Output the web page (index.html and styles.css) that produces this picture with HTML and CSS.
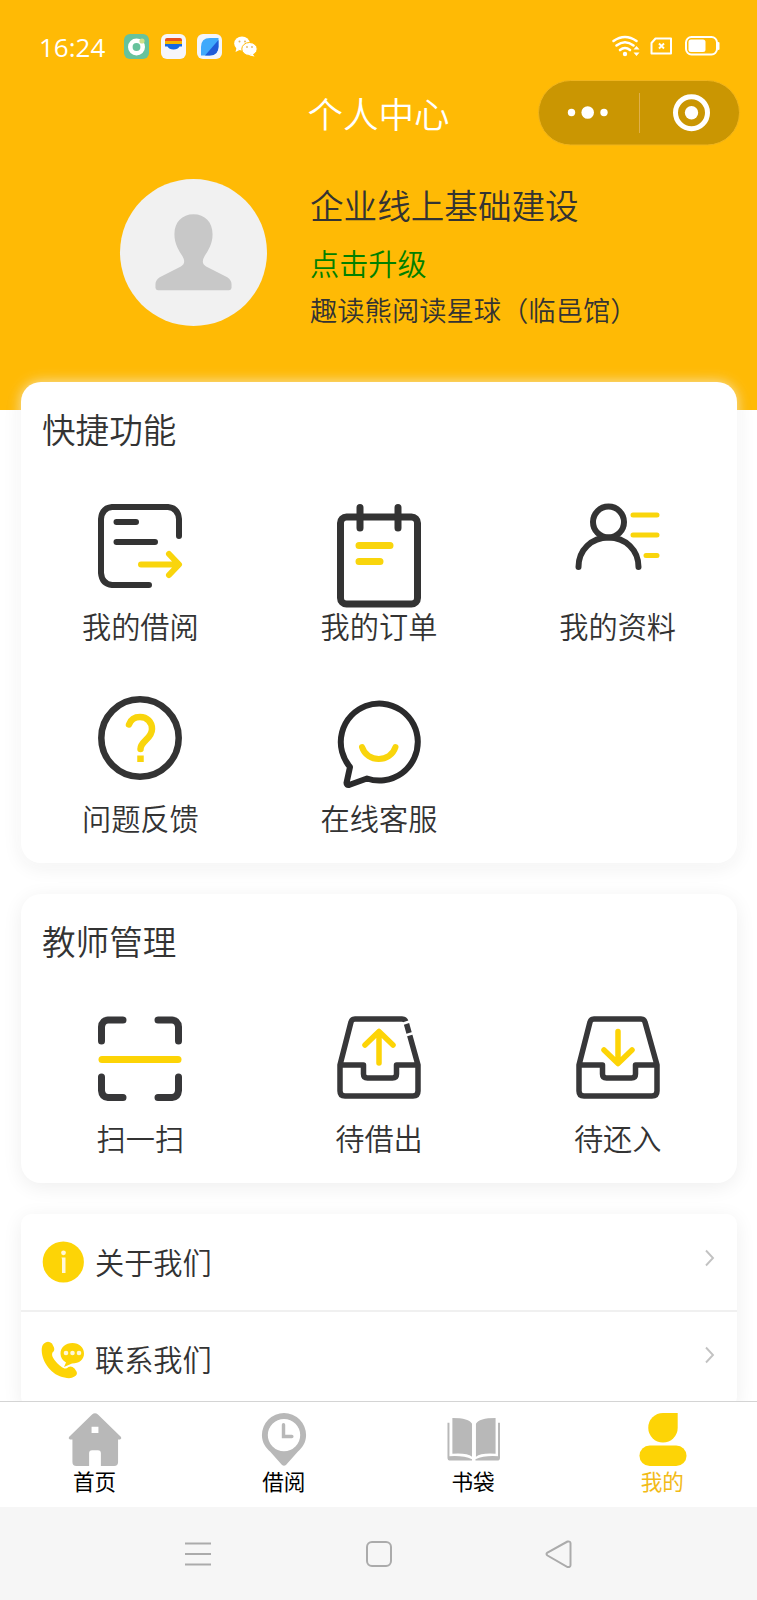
FILE: index.html
```html
<!DOCTYPE html>
<html lang="zh-CN">
<head>
<meta charset="utf-8">
<title>个人中心</title>
<link rel="stylesheet" href="styles.css">
</head>
<body>
<div class="screen">
  <header class="header">
    <div class="status">
      <span class="time">16:24</span>
      <svg class="status-left" width="136" height="28" viewBox="0 0 136 28">
        <rect x="1" y="1" width="25" height="25" rx="6" fill="#67c29c"/>
        <circle cx="13.500" cy="14" r="6.200" fill="none" stroke="#fff" stroke-width="4.600"/>
        <circle cx="19" cy="8" r="2.600" fill="#cfe08a"/>
        <rect x="38" y="1" width="25" height="25" rx="6" fill="#f6f6fb"/>
        <path d="M42 8V7q0-2 2-2h13q2 0 2 2v1z" fill="#e8501f"/>
        <path d="M42 8h17v3H42z" fill="#f7b500"/>
        <path d="M42 11h17v2.500h-2.500q-1.500 3-6 3t-6-3H42z" fill="#1668e3"/>
        <rect x="74" y="1" width="25" height="25" rx="6" fill="#f3f5fb"/>
        <path d="M78 22.500v-8.500q0-9 9-9h8.500v8.500q0 9-9 9z" fill="#3fa9fb"/>
        <path d="M82 22.500 95.500 7v6.500q0 9-9 9z" fill="#1f5bd8"/>
        <ellipse cx="119" cy="10.500" rx="7.800" ry="7" fill="#fff"/>
        <path d="m113.500 15-1 4 4-2z" fill="#fff"/>
        <ellipse cx="126.500" cy="16" rx="7.700" ry="6.500" fill="#fff" stroke="#ffba05" stroke-width="1"/>
        <path d="m129.500 20.500 2 3-5-1z" fill="#fff"/>
        <g fill="#e0b860"><circle cx="116.500" cy="8.500" r="1"/><circle cx="122" cy="8.500" r="1"/><circle cx="124" cy="14" r=".9"/><circle cx="129" cy="14" r=".9"/></g>
      </svg>
      <svg class="status-right" width="110" height="24" viewBox="0 0 110 24" fill="none" stroke="#fff">
        <path d="M2.500 6q11.500-8 23 0M5.500 10.500q8.500-6.500 17 0M9 15q5-4 10 0" stroke-width="2.600" stroke-linecap="round"/>
        <circle cx="14" cy="19" r="2.200" fill="#fff" stroke="none"/>
        <path d="m22.500 14.500 3-3.500 3 3.500zM22.500 17.500l3 3.500 3-3.500z" fill="#fff" stroke="none"/>
        <path d="M44.500 3.500H60v15H40.500V8z" stroke-width="2" stroke-linejoin="round"/>
        <path d="m48 8.500 5 5m0-5-5 5" stroke-width="1.900"/>
        <rect x="75" y="2" width="31" height="17.500" rx="5.500" stroke-width="2"/>
        <rect x="77.500" y="4.500" width="17" height="12.500" rx="2.500" fill="#fff" stroke="none"/>
        <path d="M107.500 8v6" stroke-width="2" stroke-linecap="round"/>
      </svg>
    </div>
    <div class="navbar">
      <h1 class="title">个人中心</h1>
      <svg class="capsule" width="202" height="66" viewBox="0 0 202 66">
        <rect x=".5" y=".5" width="201" height="64.500" rx="32.250" fill="#ca9602" stroke="#f0b41c"/>
        <path d="M101.500 13v40" stroke="#dfb04a"/>
        <g fill="#fff"><circle cx="33.500" cy="32.500" r="3.700"/><circle cx="49.700" cy="32.500" r="6.300"/><circle cx="66" cy="32.500" r="3.700"/><circle cx="153.500" cy="32.700" r="6.700"/></g>
        <circle cx="153.500" cy="32.700" r="16" fill="none" stroke="#fff" stroke-width="5"/>
      </svg>
    </div>
    <div class="profile">
      <svg class="avatar" width="147" height="147" viewBox="0 0 148 148">
        <circle cx="74" cy="74" r="74" fill="#f1f1f1"/>
        <path d="M74 35.500c-11.500 0-19.200 8-19.200 20 0 11 5.500 17.500 8.500 23 2 4 2 7-2 9.500L40 99q-4.300 3-4.300 7v3.500q0 2.500 2.500 2.500h71.600q2.500 0 2.500-2.500V106q0-4-4.300-7L86.700 88c-4-2.500-4-5.500-2-9.500 3-5.500 8.500-12 8.500-23 0-12-7.700-20-19.200-20z" fill="#c8c8c8"/>
      </svg>
      <div class="identity">
        <div class="name">企业线上基础建设</div>
        <div class="upgrade">点击升级</div>
        <div class="venue">趣读熊阅读星球（临邑馆）</div>
      </div>
    </div>
  </header>

  <main class="content">
    <section class="card quick">
      <h2 class="card-title">快捷功能</h2>
      <div class="grid">
        <div class="cell">
          <svg class="icon" viewBox="0 0 84 84"><g fill="none" stroke="#333" stroke-width="6" stroke-linecap="round" stroke-linejoin="round"><path d="M81 32V15Q80 4 70 3H14Q4 4 3 15v54q1 11 11 12h37M18.500 18H38M18.500 38H57"/><path d="M43 60.500h37M71 50l10 10.500L71 71" stroke="#f9d50c"/></g></svg>
          <span>我的借阅</span>
        </div>
        <div class="cell">
          <svg class="icon" viewBox="0 0 84 84"><g fill="none" stroke="#333" stroke-width="7" stroke-linecap="round"><rect x="3.500" y="13" width="77" height="87" rx="6"/><path d="M23 3.500V24M61 3.500V24"/><path d="M22 41.500h31M22 57.500h21" stroke="#f9d50c"/></g></svg>
          <span>我的订单</span>
        </div>
        <div class="cell">
          <svg class="icon" viewBox="0 0 84 84"><g fill="none" stroke="#333" stroke-width="6" stroke-linecap="round"><circle cx="32.500" cy="18" r="15.500"/><path d="M2.500 63c0-17 13-29.500 30-29.500s30 12.500 30 29.500"/><path d="M57 11h24M57 31h24M70 51.500h11" stroke="#f9d50c" stroke-width="5"/></g></svg>
          <span>我的资料</span>
        </div>
        <div class="cell">
          <svg class="icon" viewBox="0 0 84 84"><g fill="none" stroke="#333" stroke-width="6.500"><circle cx="42" cy="42" r="38.700"/><path d="M31 28.500c2-5.500 6-7.500 11-7.500 7 0 12 5 12 12 0 10-11.500 12-11.500 20" stroke="#f9d50c" stroke-linecap="round"/><path d="M42.500 59.500v6.500" stroke="#f9d50c"/></g></svg>
          <span>问题反馈</span>
        </div>
        <div class="cell">
          <svg class="icon" viewBox="0 0 84 84"><g fill="none" stroke="#2a2a2b" stroke-width="6" stroke-linecap="round" stroke-linejoin="round"><path d="M30 82.500A38.500 38.500 0 1 0 13 71L9.500 87q0 2.500 2.500 2z"/><path d="M25 51c5 16 28.500 16 33.500 0" stroke="#f9d50c"/></g></svg>
          <span>在线客服</span>
        </div>
      </div>
    </section>

    <section class="card teacher">
      <h2 class="card-title">教师管理</h2>
      <div class="grid">
        <div class="cell">
          <svg class="icon" viewBox="0 0 84 84"><g fill="none" stroke="#373739" stroke-width="7" stroke-linecap="round"><path d="M25 4H10Q4 4.500 3.500 11v14M60 4h14q6 .5 6.500 7v14M25 81.500H10Q4 81 3.500 74.500V61M60 81.500h14q6-.5 6.500-7V61"/><path d="M4 43.500h76" stroke="#fdd406"/></g></svg>
          <span>扫一扫</span>
        </div>
        <div class="cell">
          <svg class="icon" viewBox="0 0 84 84"><g fill="none" stroke="#373739" stroke-width="5.500" stroke-linejoin="round"><path d="M3 49 14 6q1-3 4-3h47q3 0 4 3l12 43v26q0 5-5 5H8q-5 0-5-5zM3 49h23.500v9q0 4 4 4h25q4 0 4-4v-9H81"/><path d="M42 47V17M28 29l14-13.500L56 29" stroke="#fdd406" stroke-linecap="round"/></g><path d="m65 8 9-3M66.500 20l10-3" stroke="#fff" stroke-width="2.500"/></svg>
          <span>待借出</span>
        </div>
        <div class="cell">
          <svg class="icon" viewBox="0 0 84 84"><g fill="none" stroke="#373739" stroke-width="5.500" stroke-linejoin="round"><path d="M3 49 14 6q1-3 4-3h47q3 0 4 3l12 43v26q0 5-5 5H8q-5 0-5-5zM3 49h23.500v9q0 4 4 4h25q4 0 4-4v-9H81"/><path d="M42 15.500V47M28 34l14 13.500L56 34" stroke="#fdd406" stroke-linecap="round"/></g></svg>
          <span>待还入</span>
        </div>
      </div>
    </section>

    <section class="card list">
      <div class="row">
        <svg width="42" height="42" viewBox="0 0 42 42"><circle cx="21.300" cy="22" r="20.600" fill="#fdd406"/><circle cx="21.500" cy="12.800" r="2.400" fill="#fff8d8"/><path d="M19.500 17.500h4V33H20V19z" fill="#fff8d8"/></svg>
        <span>关于我们</span>
        <svg class="chevron" width="12" height="20" viewBox="0 0 12 20"><path d="m2 2.500 7 7.500-7 7.500" fill="none" stroke="#c2c2c2" stroke-width="1.900"/></svg>
      </div>
      <div class="row">
        <svg width="42" height="42" viewBox="0 -4.500 42 42"><path d="M2 2q4-3.500 8 0l2 4q1 3-1.500 5-1.500 3 2 7.500 5 6.500 10 8.500 2 .5 4-1.500 3-1.500 6 1.500l2 3q1.500 3-2 5-4 3-10 1C10 34 0 21-.3 9Q-.5 4 2 2z" fill="#fdd406"/><path d="M30.500 1.500c-7 0-12 4.500-12 10.500 0 4 2 7 5.500 9l-2 4.500 8-3.500c7.500 0 12-4 12-10s-5-10.500-11.500-10.500z" fill="#fdd406"/><g fill="#fff8d8"><circle cx="24" cy="11.500" r="2.300"/><circle cx="30.500" cy="11.500" r="2.300"/><circle cx="37" cy="11.500" r="2.300"/></g></svg>
        <span>联系我们</span>
        <svg class="chevron" width="12" height="20" viewBox="0 0 12 20"><path d="m2 2.500 7 7.500-7 7.500" fill="none" stroke="#c2c2c2" stroke-width="1.900"/></svg>
      </div>
    </section>
  </main>

  <nav class="tabs">
    <a class="tab"><svg width="54" height="53" viewBox="0 0 54 54"><path d="M24 1.500q3-2.500 6 0l23.500 23q1 2-1 2.500h-2v23q0 4-4 4H33V41q0-3-3-3h-6q-3 0-3 3v13H8q-4 0-4-4V27H1.500q-2-.5-1-2.500zM23.500 14v6.500h7V14z" fill="#b8b8b8"/></svg>首页</a>
    <a class="tab"><svg width="54" height="53" viewBox="0 0 54 54"><path d="M27 0A22.500 22.500 0 0 0 4.500 22.500c0 8 4 13 8.500 17l12 13.500q2 1.500 4 0l12-13.500c4.500-4 8.500-9 8.500-17A22.500 22.500 0 0 0 27 0zm0 6a16.500 16.500 0 1 1 0 33 16.500 16.500 0 0 1 0-33z" fill="#b8b8b8"/><path d="M26.500 12v12H35" fill="none" stroke="#b8b8b8" stroke-width="3.500" stroke-linecap="round"/></svg>借阅</a>
    <a class="tab"><svg width="54" height="53" viewBox="0 0 54 54"><path d="M6 5q17 0 20 6v33.500q-5-4-20-3zM50 5q-17 0-20 6v33.500q5-4 20-3zM1 10h2v34q14-1 23 3v1.500H4q-3 0-3-3zM54.500 10h-2v34q-14-1-23 3v1.500h22q3 0 3-3z" fill="#b8b8b8"/></svg>书袋</a>
    <a class="tab active"><svg width="54" height="53" viewBox="0 0 54 54"><path d="M43 0v15a15 15 0 1 1-15-15z" fill="#fdd406"/><rect x="4" y="33" width="48" height="21" rx="10.500" fill="#fdd406"/></svg>我的</a>
  </nav>

  <footer class="system">
    <svg width="28" height="28" viewBox="0 0 28 28"><path d="M0 3.500h26M0 14h26M0 24.500h26" stroke="#ababab" stroke-width="2"/></svg>
    <svg width="28" height="28" viewBox="0 0 28 28"><rect x="2" y="2" width="24" height="24" rx="5" fill="none" stroke="#ababab" stroke-width="2"/></svg>
    <svg width="28" height="28" viewBox="0 0 28 28"><path d="M22.500 1.500l-20 11q-2 1.500 0 3l20 11.500q3 .5 3-2V3.500q0-2.500-3-2z" fill="none" stroke="#ababab" stroke-width="2"/></svg>
  </footer>
</div>
</body>
</html>
```
FILE: styles.css
```css
* { box-sizing: border-box; }
body { margin: 0; font-family: "Noto Sans CJK SC", sans-serif; font-weight: 350; color: #333; }
h1, h2 { margin: 0; font-weight: inherit; }
svg { display: block; flex: none; overflow: visible; }

.screen { width: 757px; height: 1600px; display: flex; flex-direction: column; overflow: hidden; background: #fff; }

.header { height: 410px; flex: none; background: #ffba05; }
.status { height: 80px; padding: 13px 36px 0 39px; display: flex; align-items: center; color: #fff; }
.time { width: 84px; padding-top: 1px; font: 400 26px/30px "Open Sans", sans-serif; }
.status-right { margin-left: auto; }
.navbar { height: 66px; display: grid; grid-template-columns: 1fr auto 1fr; align-items: center; padding: 0 17px; }
.title { grid-column: 2; font-size: 35.5px; line-height: 60px; color: #fff; }
.capsule { justify-self: end; }
.profile { display: flex; align-items: flex-start; padding: 33px 0 0 120px; gap: 43px; }
.name { margin-top: 2px; font-size: 33.6px; line-height: 48px; }
.upgrade { margin-top: 11px; font-size: 29.2px; line-height: 44px; color: #008000; }
.venue { margin-top: 5px; font-size: 27.3px; line-height: 40px; }

.content { flex: 1; min-height: 0; margin: -28px 20px 0 21px; }
.card { margin-bottom: 31px; border-radius: 20px; background: #fff; box-shadow: 0 4px 20px rgba(0, 0, 0, .07); }
.quick { height: 481px; box-shadow: 0 0 14px rgba(255, 255, 255, .7), 0 4px 20px rgba(0, 0, 0, .07); }
.teacher { height: 289px; }
.card-title { height: 122px; padding: 23px 21px 0; font-size: 33.6px; line-height: 48px; }
.grid { display: grid; grid-template-columns: repeat(3, 1fr); grid-auto-rows: 192px; }
.cell { display: flex; flex-direction: column; align-items: center; gap: 15px; font-size: 29.2px; line-height: 44px; }
.icon { width: 84px; height: 84px; }

.list { border-radius: 10px; }
.row { display: flex; align-items: center; gap: 11px; height: 96px; padding: 0 21px 2px; font-size: 29.2px; line-height: 44px; }
.row + .row { height: 97px; padding-bottom: 4px; border-top: 2px solid #f0f0f0; }
.chevron { margin: -6px 0 0 auto; }

.tabs { position: relative; z-index: 1; flex: none; height: 106px; padding-top: 11px; display: grid; grid-template-columns: repeat(4, 1fr); background: #fff; border-top: 1px solid #d4d4d4; }
.tab { display: flex; flex-direction: column; align-items: center; font-size: 21.6px; font-weight: 400; line-height: 30px; color: #000; }
.active { color: #f2bb18; }
.system { position: relative; z-index: 1; flex: none; height: 93px; display: flex; justify-content: center; gap: 152px; padding-top: 33px; background: #f6f6f6; }
```
